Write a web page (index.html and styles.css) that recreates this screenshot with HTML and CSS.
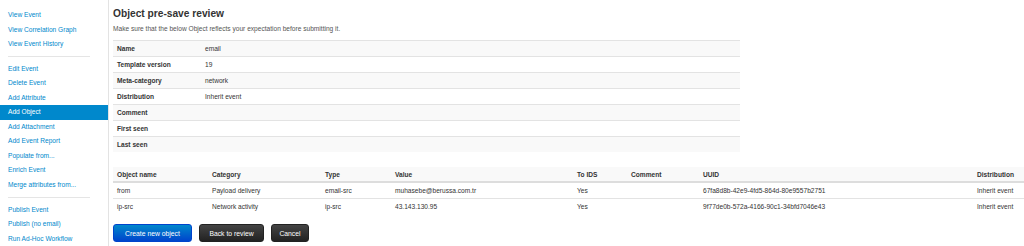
FILE: index.html
```html
<!DOCTYPE html>
<html lang="en">
<head>
  <meta charset="UTF-8">
  <title>Object pre-save review</title>
  <link rel="stylesheet" href="styles.css">
</head>
<body>
  <div class="layout">
    <ul class="side-nav">
      <li><a href="#">View Event</a></li>
      <li><a href="#">View Correlation Graph</a></li>
      <li><a href="#">View Event History</a></li>
      <li class="divider"></li>
      <li><a href="#">Edit Event</a></li>
      <li><a href="#">Delete Event</a></li>
      <li><a href="#">Add Attribute</a></li>
      <li class="active"><a href="#">Add Object</a></li>
      <li><a href="#">Add Attachment</a></li>
      <li><a href="#">Add Event Report</a></li>
      <li><a href="#">Populate from...</a></li>
      <li><a href="#">Enrich Event</a></li>
      <li><a href="#">Merge attributes from...</a></li>
      <li class="divider"></li>
      <li><a href="#">Publish Event</a></li>
      <li><a href="#">Publish (no email)</a></li>
      <li><a href="#">Run Ad-Hoc Workflow</a></li>
    </ul>
    <div class="main">
      <h2>Object pre-save review</h2>
      <p class="desc">Make sure that the below Object reflects your expectation before submitting it.</p>
      <table class="meta-table">
        <tr><th>Name</th><td>email</td></tr>
        <tr><th>Template version</th><td>19</td></tr>
        <tr><th>Meta-category</th><td>network</td></tr>
        <tr><th>Distribution</th><td>Inherit event</td></tr>
        <tr><th>Comment</th><td></td></tr>
        <tr><th>First seen</th><td></td></tr>
        <tr><th>Last seen</th><td></td></tr>
      </table>
      <table class="attr-table">
        <thead>
          <tr>
            <th class="c-name">Object name</th>
            <th class="c-cat">Category</th>
            <th class="c-type">Type</th>
            <th class="c-value">Value</th>
            <th class="c-ids">To IDS</th>
            <th class="c-comment">Comment</th>
            <th class="c-uuid">UUID</th>
            <th class="c-dist">Distribution</th>
          </tr>
        </thead>
        <tbody>
          <tr>
            <td>from</td>
            <td>Payload delivery</td>
            <td>email-src</td>
            <td>muhasebe@berussa.com.tr</td>
            <td>Yes</td>
            <td></td>
            <td>67fa8d8b-42e9-4fd5-864d-80e9557b2751</td>
            <td>Inherit event</td>
          </tr>
          <tr>
            <td>ip-src</td>
            <td>Network activity</td>
            <td>ip-src</td>
            <td>43.143.130.95</td>
            <td>Yes</td>
            <td></td>
            <td>9f77de0b-572a-4166-90c1-34bfd7046e43</td>
            <td>Inherit event</td>
          </tr>
        </tbody>
      </table>
      <div class="actions">
        <button class="btn btn-primary">Create new object</button>
        <button class="btn btn-dark">Back to review</button>
        <button class="btn btn-dark">Cancel</button>
      </div>
    </div>
  </div>
</body>
</html>
```

FILE: styles.css
```css
body { margin: 0; background: #fff; font-family: "Liberation Sans", Arial, sans-serif; font-size: 6.6px; color: #333; }
.layout { display: flex; align-items: stretch; min-height: 246px; }

.side-nav {
  list-style: none; margin: 0; padding: 8px 0 0 0;
  width: 108px; flex: none; border-right: 1px solid #e3e3e3;
}
.side-nav li { line-height: 14.5px; height: 14.5px; }
.side-nav a { display: block; padding-left: 8px; color: #0088cc; text-decoration: none; }
.side-nav .active { background: #0088cc; }
.side-nav .active a { color: #fff; }
.side-nav .divider { height: 1px; margin: 4.7px 18px 4.8px 8px; background: #e5e5e5; }

.main { flex: 1; padding-left: 4px; min-width: 0; }
h2 { margin: 0; padding-top: 8px; font-size: 10.2px; line-height: 12px; font-weight: bold; color: #333; }
.desc { margin: 4px 0 0 0; line-height: 10px; color: #555; }

table { border-collapse: collapse; }
th { font-weight: bold; text-align: left; }
.meta-table { width: 627px; margin-top: 6px; }
.meta-table th, .meta-table td { height: 15px; padding: 0 4px; border-top: 1px solid #e3e3e3; vertical-align: middle; }
.meta-table th { width: 80px; }
.meta-table tr:nth-child(odd) { background: #f9f9f9; }

.attr-table { width: 911px; margin-top: 15px; table-layout: fixed; }
.attr-table th, .attr-table td { padding: 0 4px; vertical-align: middle; white-space: nowrap; }
.attr-table thead th { height: 14px; background: #f9f9f9; border-bottom: 2px solid #ddd; }
.attr-table td { height: 15px; border-top: 1px solid #e3e3e3; }
.attr-table tbody tr:first-child td { border-top: none; }
.c-name { width: 87px; }
.c-cat { width: 105px; }
.c-type { width: 62px; }
.c-value { width: 174px; }
.c-ids { width: 46px; }
.c-comment { width: 64px; }
.c-uuid { width: 266px; }
.c-dist { width: 43px; }

.actions { display: flex; gap: 7px; margin-top: 10px; }
.btn {
  height: 18px; padding: 0 7px; border-radius: 3px; border: 1px solid #222;
  font-family: inherit; font-size: 6.8px; color: #fff; cursor: pointer;
}
.btn-primary { background: linear-gradient(#0088cc, #0044cc); border-color: #0044cc; width: 79px; }
.btn-dark { background: linear-gradient(#444, #222); }
.btn-dark:nth-child(2) { width: 65px; }
.btn-dark:nth-child(3) { width: 38px; }
```
